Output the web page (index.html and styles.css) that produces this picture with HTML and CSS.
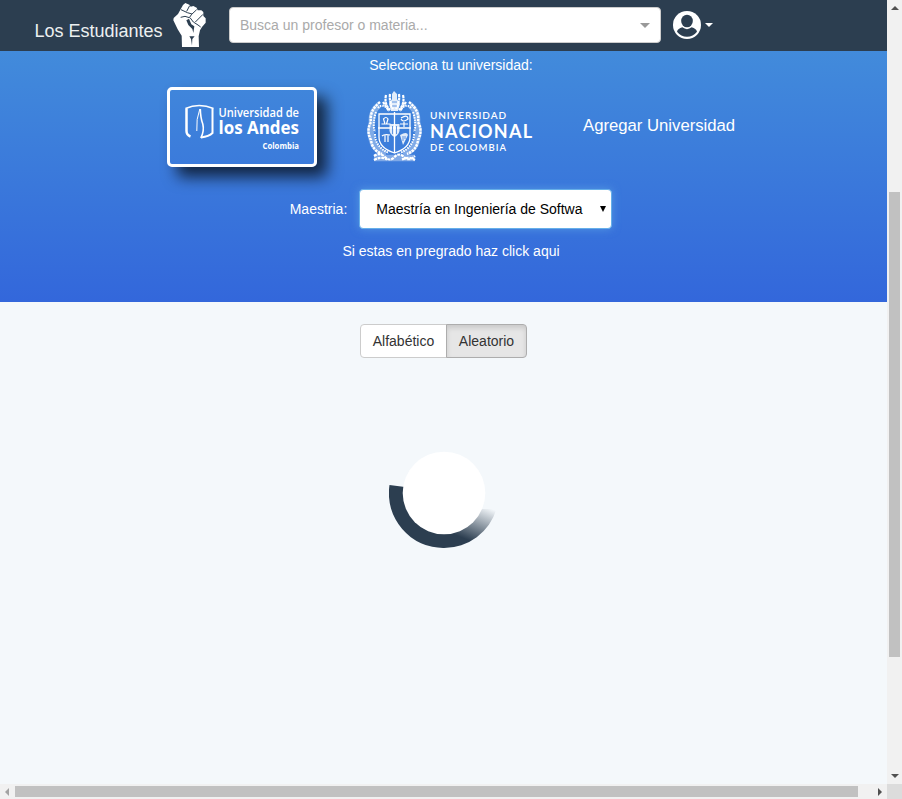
FILE: index.html
```html
<!DOCTYPE html>
<html lang="es">
<head>
<meta charset="utf-8">
<title>Los Estudiantes</title>
<link rel="stylesheet" href="styles.css">
</head>
<body>
<div class="window">
  <div class="page">
    <header class="navbar">
      <a class="brand">Los Estudiantes</a>
      <svg class="fist" viewBox="519 9 99 132">
        <path fill="#fff" d="M549 15L556 9L568 14L572 20L580 18L590 23L593 31L604 31L610 36L610 48L617 55L617 68L606 81L600 91L596 109L597 141H546L545 107L533 88L520 61L521 54L534 42Z"/>
        <path fill="none" stroke="#2c3e50" stroke-width="3" d="M543 29L562 38L576 42M569 17L560 34M590 29L574 44M609 43L586 66M575 43L568 53L555 49L542 52M570 53L580 66L594 75L602 81"/>
        <path fill="#2c3e50" d="M559 61L567 56L574 73L583 79L580 99L577 87L565 75ZM568 109H584L577 117L576 137L573 117Z"/>
      </svg>
      <div class="search"><span>Busca un profesor o materia...</span><i class="search-caret"></i></div>
      <svg class="user" viewBox="159 33 84 84">
        <circle cx="201" cy="75" r="42" fill="#fff"/>
        <ellipse cx="201" cy="63" rx="17.5" ry="19" fill="#2c3e50"/>
        <path fill="#2c3e50" d="M171 95C173 88 178 85 187 82Q201 93 215 82C224 85 229 88 231 95Q219 110 201 110T171 95Z"/>
      </svg>
      <i class="user-caret"></i>
    </header>

    <section class="hero">
      <div class="hero-inner">
        <p class="prompt">Selecciona tu universidad:</p>
        <div class="universities">
          <div class="university selected">
            <svg viewBox="0 0 144 74" width="144" height="74">
              <g fill="none" stroke="#fff">
                <path stroke-width="1.500" d="M15.500 18.500Q29 12.500 43.500 18.500"/>
                <path stroke-width="2.500" d="M16.500 18.500V41Q16.500 45 20.500 46.500"/>
                <path stroke-width="2" d="M42.500 18.500V43Q39 46.500 31 47.500"/>
                <path stroke-width="1.600" d="M30.300 19Q30.500 28 32.800 34Q34.500 41 30.800 48"/>
                <path stroke-width="1" d="M29.800 19Q26 29 26.800 41"/>
              </g>
              <g class="andes-text">
                <text x="48.500" y="26.500" font-size="13" textLength="80.500" lengthAdjust="spacingAndGlyphs">Universidad de</text>
                <text class="strong" x="48.500" y="44" font-size="18" textLength="80.500" lengthAdjust="spacingAndGlyphs">los Andes</text>
                <text class="strong" x="92.500" y="58.500" font-size="8.500" textLength="36.500" lengthAdjust="spacingAndGlyphs">Colombia</text>
              </g>
            </svg>
          </div>
          <svg class="nacional" viewBox="0 0 168 74" width="168" height="74">
            <g fill="none" stroke="#fff">
              <path stroke-width="6.500" opacity=".35" d="M12 15Q4 21 5 32Q2 41 5 50Q7 60 19 64M43 15Q51 21 50 32Q53 41 50 50Q48 60 36 64M7 68H48"/>
              <path stroke-width="2.500" stroke-dasharray="2.500 .8" d="M13 12Q2 21 4 32Q-1 41 4 50Q5 60 15 64M42 12Q53 21 51 32Q56 41 51 50Q50 60 40 64"/>
              <path stroke-width="2" stroke-dasharray="1.500 1" d="M11 18Q15 13 21 19M44 18Q40 13 34 19M8 44Q8 57 22 63M47 44Q47 57 33 63M9 22Q5 34 8 42M46 22Q50 34 47 42"/>
              <path stroke-width="1.300" d="M12 24H43V47Q43 58 27.500 63Q12 58 12 47ZM27.500 22V63M11 38H44"/>
              <path stroke-width="1.200" d="M14.500 34H18L16.500 29Q19 26 21 29L19.500 34H23.500M34 28Q41 24 41 29Q36 33 34 29M33 34H41M37 32V37M15 46Q17 44 23 45M18 45V52M21 45V52"/>
              <path stroke-width="2.200" stroke-dasharray="3 .8" d="M7 66Q13 62 18 67T27.500 67T37 67T48 66M7 70Q14 66 20 69.500M35 69.500Q42 66 48 70"/>
              <path stroke-width="2.200" stroke-dasharray="3 .5" d="M19 5Q17 14 23 20M23 4Q22 12 26 19M36 5Q38 14 32 20M32 4Q33 12 29 19M16 12L22 21M39 12L33 21"/>
            </g>
            <path fill="#fff" opacity=".85" d="M25 4L27 1L30 4L30 9L33 14L31 21H24L22 14L25 9ZM22.500 34H32.500V41Q31.500 45 27.500 47Q23.500 45 22.500 41ZM33 45Q40 41 41 45L36 55Z"/>
            <path fill="none" stroke="#3f7fd9" stroke-width=".8" d="M25.500 36V44M29.500 36V44M25 12H30M25 16H30M36 46V51M38 46V49"/>
            <g class="nacional-text">
              <text x="63" y="28.500" font-size="10" textLength="76">UNIVERSIDAD</text>
              <text class="strong" x="63" y="47.500" font-size="18" textLength="102">NACIONAL</text>
              <text x="63" y="60.500" font-size="9.500" textLength="76">DE COLOMBIA</text>
            </g>
          </svg>
          <a class="add">Agregar Universidad</a>
        </div>
        <div class="program">
          <label>Maestria:</label>
          <div class="select"><span>Maestría en Ingeniería de Softwa</span><i></i></div>
        </div>
        <a class="undergrad">Si estas en pregrado haz click aqui</a>
      </div>
    </section>

    <main class="results">
      <div class="sort">
        <button class="sort-option">Alfabético</button><button class="sort-option active">Aleatorio</button>
      </div>
      <svg class="spinner" viewBox="0 0 110 110" width="110" height="110">
        <defs>
          <linearGradient id="fade" gradientUnits="userSpaceOnUse" x1="98" y1="69" x2="84" y2="104">
            <stop offset="0" stop-color="#2c3e50" stop-opacity="0"/>
            <stop offset="1" stop-color="#2c3e50"/>
          </linearGradient>
        </defs>
        <path fill="#2c3e50" d="M.500 47A54.700 54.700 0 0 0 55 110V50L14 48.700Z"/>
        <path fill="url(#fade)" d="M55 110A54.700 54.700 0 0 0 107.500 71H90L55 54Z"/>
        <circle cx="55" cy="55" r="41.300" fill="#fff"/>
      </svg>
    </main>
  </div>
  <div class="scroll-y"><i class="arrow up"></i><b></b><i class="arrow down"></i></div>
  <div class="scroll-x"><i class="arrow left"></i><b></b><i class="arrow right"></i></div>
  <div class="corner"></div>
</div>
</body>
</html>
```
FILE: styles.css
```css
* { box-sizing: border-box; }
body { margin: 0; font: 14px/20px "Liberation Sans", Arial, sans-serif; color: #333; }
.window { display: grid; grid-template: 784px 15px / 887px 15px; width: 902px; height: 799px; overflow: hidden; }
.page { min-width: 0; overflow: hidden; background: #f4f8fb; }

.navbar { display: flex; align-items: flex-start; height: 51px; padding-left: 34.500px; background: #2c3e50; }
.brand { width: 138px; padding-top: 21px; font-size: 18px; color: #ecf0f1; white-space: nowrap; }
.fist { width: 33px; height: 44px; margin-top: 3px; margin-left: .5px; }
.search { display: flex; align-items: center; justify-content: space-between; width: 432px; height: 36px; margin: 7px 0 0 23px; padding: 0 10px; border: 1px solid #ccc; border-radius: 4px; background: #fff; color: #aaa; }
.search-caret { border: 5px solid transparent; border-top-color: #999; border-bottom: 0; }
.user { width: 28px; height: 28px; margin: 11px 0 0 12px; }
.user-caret { margin: 23px 0 0 4px; border: 4px solid transparent; border-top-color: #fff; border-bottom: 0; }

.hero { height: 251px; background: linear-gradient(#428bdb, #3367db); color: #fff; }
.hero-inner { display: flex; flex-direction: column; align-items: center; width: 902px; padding-top: 4px; }
.prompt { margin: 0; }
.universities { display: flex; align-items: center; height: 80px; margin-top: 12px; }
.university { width: 150px; height: 80px; }
.selected { border: 3px solid #fff; border-radius: 5px; box-shadow: 10px 10px 15px rgba(0, 0, 0, .7); }
.university svg, .nacional { display: block; }
.andes-text { fill: #fff; font-family: "Open Sans", sans-serif; font-weight: 600; }
.strong { font-weight: 700; }
.nacional { margin: 0 48px 0 50px; }
.nacional-text { fill: #fff; font-family: Lato, sans-serif; font-weight: 600; }
.nacional-text .strong { font-weight: 700; }
.add { width: 152px; padding-bottom: 3px; font-size: 16.700px; white-space: nowrap; }
.program { display: flex; align-items: center; gap: 12px; margin-top: 22px; }
.select { display: flex; align-items: center; justify-content: space-between; width: 253px; height: 40px; padding: 0 5px 0 16px; border: 1px solid #66afe9; border-radius: 4px; background: #fff; color: #000; box-shadow: 0 0 8px rgba(102, 175, 233, .6); }
.select i { border: 3.500px solid transparent; border-top: 6px solid #000; border-bottom: 0; }
.undergrad { margin-top: 12px; }

.results { display: flex; flex-direction: column; align-items: center; padding-top: 22px; }
.sort { display: flex; }
.sort-option { height: 34px; width: 87px; padding: 0; border: 1px solid #ccc; border-radius: 4px 0 0 4px; background: #fff; color: #333; font: inherit; }
.active { width: 81px; margin-left: -1px; border-color: #adadad; border-radius: 0 4px 4px 0; background: #e6e6e6; box-shadow: inset 0 3px 5px rgba(0, 0, 0, .125); }
.spinner { margin-top: 80px; }

.scroll-y, .scroll-x { display: flex; align-items: center; background: #f1f1f1; }
.scroll-y { flex-direction: column; padding: 6px 0; }
.scroll-y b { width: 11px; height: 465px; margin: 182px 0 117px; background: #c1c1c1; }
.scroll-x { padding-left: 5px; }
.scroll-x b { width: 843px; height: 11px; margin: 0 20px 0 6px; background: #c1c1c1; }
.arrow { flex: none; border: 4px solid transparent; }
.up { border-top: 0; border-bottom-color: #505050; }
.down { border-bottom: 0; border-top-color: #505050; }
.left { border-left: 0; border-right-color: #a3a3a3; }
.right { border-right: 0; border-left-color: #505050; }
.corner { background: #dcdcdc; }
```
